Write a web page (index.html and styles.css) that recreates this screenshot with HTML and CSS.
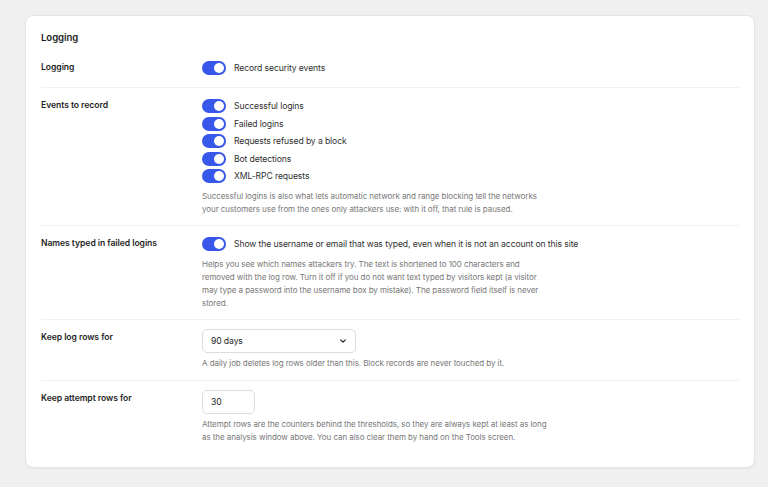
FILE: index.html
```html
<!DOCTYPE html>
<html lang="en">
<head>
  <meta charset="UTF-8" />
  <meta name="viewport" content="width=device-width, initial-scale=1.0" />
  <title>Logging settings</title>
  <link rel="stylesheet" href="styles.css">
</head>
<body>
  <div class="card">
    <h2 class="card-title">Logging</h2>

    <!-- Logging on/off -->
    <div class="row row-plain">
      <div class="row-label">Logging</div>
      <div class="row-field">
        <label class="toggle-item"><span class="toggle on"></span>Record security events</label>
      </div>
    </div>

    <!-- Events -->
    <div class="row">
      <div class="row-label">Events to record</div>
      <div class="row-field">
        <div class="toggle-list">
          <label class="toggle-item"><span class="toggle on"></span>Successful logins</label>
          <label class="toggle-item"><span class="toggle on"></span>Failed logins</label>
          <label class="toggle-item"><span class="toggle on"></span>Requests refused by a block</label>
          <label class="toggle-item"><span class="toggle on"></span>Bot detections</label>
          <label class="toggle-item"><span class="toggle on"></span>XML-RPC requests</label>
        </div>
        <p class="help">Successful logins is also what lets automatic network and range blocking tell the networks<br>your customers use from the ones only attackers use: with it off, that rule is paused.</p>
      </div>
    </div>

    <!-- Typed names -->
    <div class="row">
      <div class="row-label">Names typed in failed logins</div>
      <div class="row-field">
        <label class="toggle-item"><span class="toggle on"></span>Show the username or email that was typed, even when it is not an account on this site</label>
        <p class="help">Helps you see which names attackers try. The text is shortened to 100 characters and<br>removed with the log row. Turn it off if you do not want text typed by visitors kept (a visitor<br>may type a password into the username box by mistake). The password field itself is never<br>stored.</p>
      </div>
    </div>

    <!-- Retention -->
    <div class="row row-input">
      <div class="row-label">Keep log rows for</div>
      <div class="row-field">
        <div class="select">
          <span>90 days</span>
          <svg viewBox="0 0 10 10" width="8" height="8"><path d="M2 3.5 L5 6.5 L8 3.5" fill="none" stroke="#1e1e1e" stroke-width="1.4" stroke-linecap="round" stroke-linejoin="round"/></svg>
        </div>
        <p class="help">A daily job deletes log rows older than this. Block records are never touched by it.</p>
      </div>
    </div>

    <div class="row row-input">
      <div class="row-label">Keep attempt rows for</div>
      <div class="row-field">
        <div class="number-input">30</div>
        <p class="help">Attempt rows are the counters behind the thresholds, so they are always kept at least as long<br>as the analysis window above. You can also clear them by hand on the Tools screen.</p>
      </div>
    </div>
  </div>
</body>
</html>
```

FILE: styles.css
```css
:root {
  --accent: #3858e9;
  --bg-color: #f0f0f0;
  --text-color: #1e1e1e;
  --muted: #787878;
  --line: #f0f0f0;
}
* { box-sizing: border-box; }
body {
  margin: 0;
  font-family: Inter, 'Noto Sans', sans-serif;
  background: var(--bg-color);
  color: var(--text-color);
  font-size: 8.6px;
  letter-spacing: -0.1px;
}
.card {
  margin: 15px 13px 21px 25px;
  padding: 15px 15px 13px;
  background: #fff;
  border: 1px solid #e4e4e4;
  border-radius: 8px;
  box-shadow: 0 1px 2px rgba(0, 0, 0, 0.04);
}
.card-title {
  margin: 0 0 4px;
  font-size: 9.6px;
  line-height: 14px;
  font-weight: 600;
  letter-spacing: -0.05px;
}
.row {
  display: grid;
  grid-template-columns: 161px 1fr;
  padding: 11px 0 9px;
}
.row-plain { padding: 12px 0 12px; }
.row-input { padding-bottom: 10px; }
.row + .row { border-top: 1px solid var(--line); }
.row-label {
  font-weight: 600;
  line-height: 13px;
  letter-spacing: -0.05px;
}
.toggle-list {
  display: flex;
  flex-direction: column;
  gap: 3.5px;
}
.toggle-item {
  display: flex;
  align-items: center;
  gap: 8px;
  height: 14px;
  color: #2f2f2f;
}
.toggle {
  position: relative;
  flex: none;
  width: 24px;
  height: 14px;
  border-radius: 7px;
  background: #c8c8c8;
}
.toggle::after {
  content: "";
  position: absolute;
  top: 2px;
  left: 2px;
  width: 10px;
  height: 10px;
  border-radius: 50%;
  background: #fff;
}
.toggle.on { background: var(--accent); }
.toggle.on::after { left: 12px; }
.help {
  margin: 7px 0 0;
  font-size: 8px;
  line-height: 13px;
  letter-spacing: -0.07px;
  color: var(--muted);
}
.select,
.number-input {
  display: flex;
  align-items: center;
  height: 24px;
  margin-top: -2px;
  padding: 0 8px;
  border: 1px solid #dcdcdc;
  border-radius: 5px;
  background: #fff;
}
.select + .help,
.number-input + .help { margin-top: 4px; }
.select {
  width: 154px;
  justify-content: space-between;
}
.number-input { width: 53px; }
```
